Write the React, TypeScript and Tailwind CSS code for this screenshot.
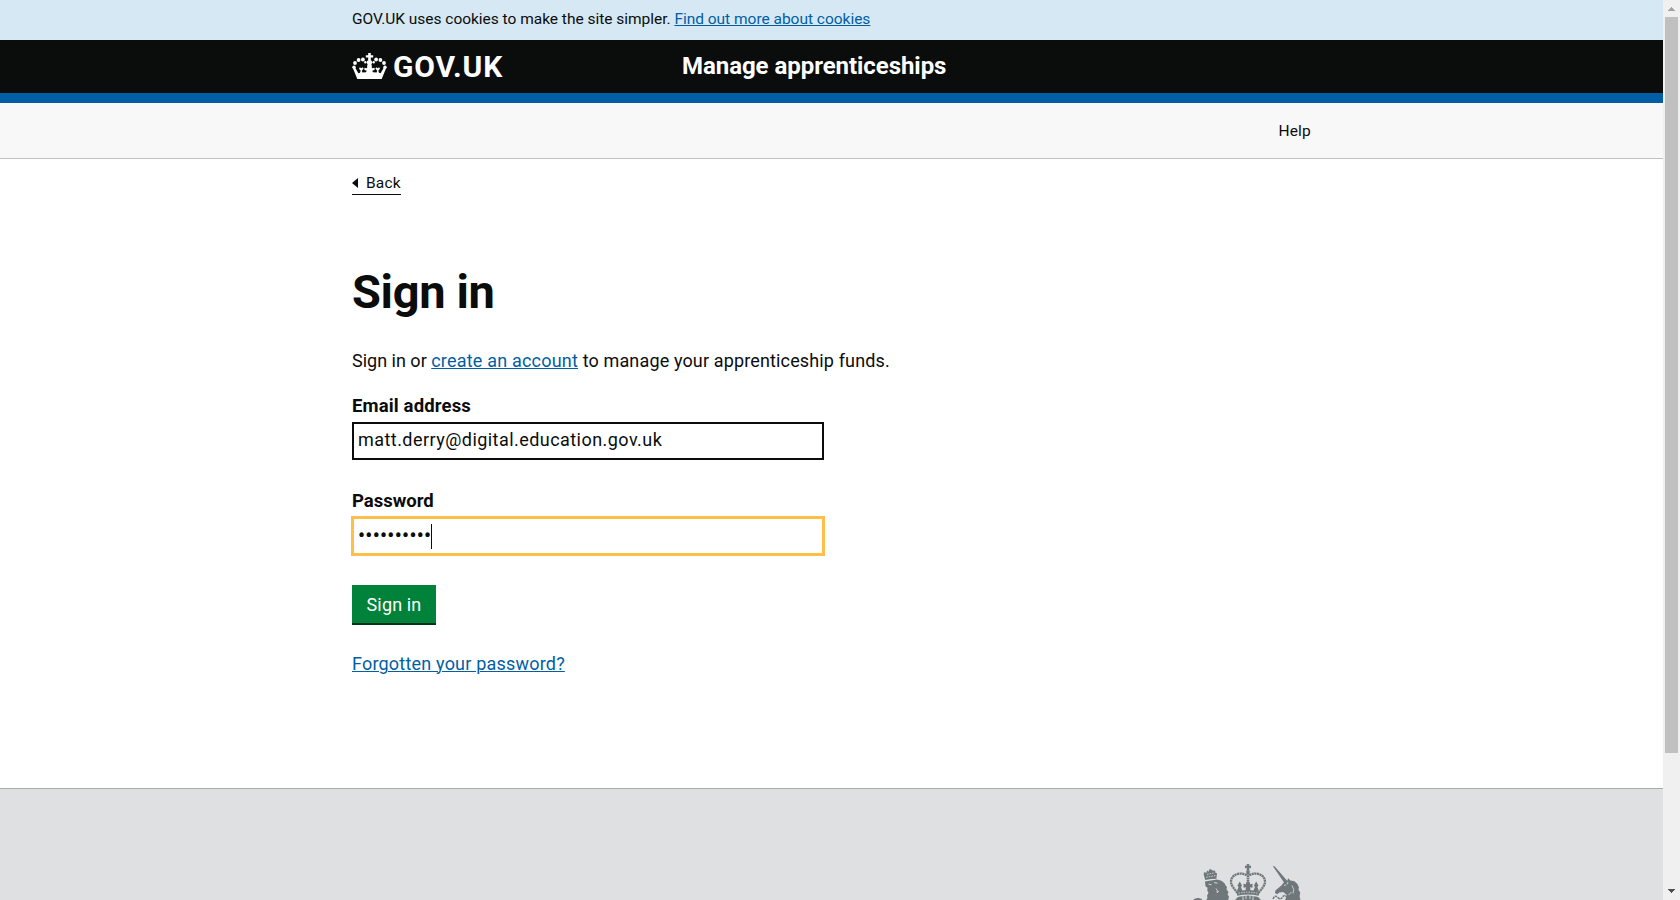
import React from 'react';

const linkClass = 'text-[#005ea5] underline decoration-1 underline-offset-1';

function Crown() {
  return (
    <svg className="h-[27px] w-[35px]" viewBox="0 0 35 27" fill="#fff">
      <path d="M16.2 0h2.600v2.300h2.400v2.300h-2.400v2.600c1.800.6 2 2.600.6 4l.6 2.600h-5l.6-2.600c-1.400-1.400-1.200-3.400.6-4V4.600h-2.400V2.300h2.400z" />
      <circle cx="2" cy="14.200" r="1.700" />
      <circle cx="3" cy="10" r="1.900" />
      <circle cx="6.600" cy="7" r="1.900" />
      <circle cx="10.900" cy="6.500" r="1.900" />
      <circle cx="13.300" cy="9.300" r="1.200" />
      <circle cx="33" cy="14.200" r="1.700" />
      <circle cx="32" cy="10" r="1.900" />
      <circle cx="28.400" cy="7" r="1.900" />
      <circle cx="24.100" cy="6.500" r="1.900" />
      <circle cx="21.700" cy="9.300" r="1.200" />
      <path d="M1 15.500l2.200-.8 3.200 5.500 1.600-.4.700-2-1.700-2 .9-1.600 1.400 1.100 1.500-1.100.8 1.600-1.800 2 .6 1.700 3.500-.2.900-1.600-2.400-.6v-2.400l2.500.5.8-2.500h3.600l.8 2.500 2.500-.5v2.400l-2.400.6.9 1.600 3.500.2.600-1.700-1.800-2 .8-1.600 1.500 1.100 1.400-1.100.9 1.600-1.700 2 .7 2 1.600.4 3.200-5.500 2.200.8-4.300 10.400H5.300z" />
    </svg>
  );
}

function CoatOfArms() {
  return (
    <svg className="block h-[40px] w-[120px]" viewBox="1190 860 120 40" fill="#6f777b">
      {/* lion */}
      <path d="M1205.200 880l-1.600-6 .8-2 2 1 .6-2.600 1.800 1.200.8-2.600 2.200.8 1.200 1 2-.4.4 2.400 1.600.4-.6 5.600-5.400.2z" />
      <path d="M1206.200 877.200l9.600-1.600M1207 874.400l7.600-1.600" stroke="#dee0e2" strokeWidth=".8" strokeDasharray="1.600 1" />
      <path d="M1205 881.500l6-1 6-1 4.500 1.300 3 2.500 1 2 1.500 2-.5 2 2 3-1 2 1.500 2.500-1 4h-22l1.500-3-.5-2 1.500-3-1.200-2 .2-3-2-1.500z" />
      <path d="M1208.500 884.200l3 .6M1214 882.600l3.500.6M1216 888.500q2 1.500 1 4l1.800-1.200" stroke="#dee0e2" strokeWidth=".9" fill="none" />
      <path d="M1193 900q4-3.600 9-.8v.8z" />
      {/* crown */}
      <path d="M1246.600 864h2.800l-.4 1.900 2-.5v2.800l-2-.4.6 2.200h-3.200l.6-2.200-2 .4v-2.800l2 .5z" />
      <circle cx="1248" cy="872" r="1.900" />
      <path d="M1246.700 875.200c-7-3.800-15.400-.6-15.700 6.300-.1 4.400 3.800 7.500 6.500 11.500M1249.300 875.200c7-3.800 15.400-.6 15.700 6.300.1 4.400-3.800 7.500-6.500 11.500" fill="none" stroke="#6f777b" strokeWidth="2.300" strokeDasharray="2.100 .5" />
      <path d="M1248 873v11" stroke="#6f777b" strokeWidth="2.600" strokeDasharray="1.800 .5" />
      <path d="M1246.500 882h3l.6 2.300 2.400-.6v4l-2.400-.5.500 3.800h-5.200l.5-3.800-2.400.5v-4l2.400.6z" />
      <path d="M1239.800 881.500l2.200 4-1 1.500 1.400 4h-5.400l1.500-4-1-1.500zM1256.200 881.500l2.200 4-1 1.500 1.400 4h-5.400l1.500-4-1-1.500z" />
      <path d="M1236.500 891.500q11.500-3 23 0l-.8 4.300q-10.700-2.800-21.400 0z" />
      <path d="M1238.500 893.300q9.500-2.300 19 0" fill="none" stroke="#dee0e2" strokeWidth=".8" strokeDasharray="1.500 1" />
      <path d="M1238 897q10-3 20 0l3 3h-26z" />
      <path d="M1243 895.500v4.500M1246 895v4M1250 895v4M1253 895.500v4.500" stroke="#dee0e2" strokeWidth=".9" />
      {/* unicorn */}
      <path d="M1272.800 866l2 .6 13 15-3.300 1.600z" />
      <path d="M1275 893l.4-2.600 6-4.800 2.600-3.400 3-.8 1.200-3.200 2.200 2.400 4 .6 3 2.800 1.600 3.600-.6 2 1.800 2.800-.6 4 .8 3.600h-15.200l1.600-5-3.600-3-4 .6-1.800 1.600z" />
      <path d="M1284 885.500l2-.6M1288 882l-1 2.500M1292 885.500q3 4 1 8M1288.500 895l3-3" stroke="#dee0e2" strokeWidth=".8" fill="none" />
      <path d="M1273 899q2-4.600 4.800-1.600t5-.6 5 2.200" fill="none" stroke="#6f777b" strokeWidth="1.500" strokeDasharray="2.400 .7" />
    </svg>
  );
}

function Scrollbar() {
  return (
    <div className="flex h-[900px] w-[17px] shrink-0 flex-col items-center bg-[#f0f0f0]">
      <svg className="h-[17px] w-[17px]" viewBox="0 0 17 17" fill="#a3a3a3" shapeRendering="crispEdges">
        <path d="M5 11h7V10h-1V9h-1V8H9V7H8v1H7v1H6v1H5z" />
      </svg>
      <div className="h-[736px] w-[13px] bg-[#c0c0c0]" />
      <svg className="mt-auto h-[17px] w-[17px]" viewBox="0 0 17 17" fill="#505050" shapeRendering="crispEdges">
        <path d="M5 6h7v1h-1v1h-1v1H9v1H8V9H7V8H6V7H5z" />
      </svg>
    </div>
  );
}

export default function App() {
  return (
    <div className="flex h-[900px] w-full overflow-hidden bg-white font-['Roboto','Liberation_Sans',sans-serif] text-[#0b0c0c]">
      <div className="flex min-w-0 flex-1 flex-col">
        <div className="h-[40px] bg-[#d5e8f3] pt-[9px] pl-px">
          <p className="mx-auto w-[960px] text-[15.5px] leading-[20px] tracking-[-0.02px]">
            GOV.UK uses cookies to make the site simpler.{' '}
            <a className={linkClass}>Find out more about cookies</a>
          </p>
        </div>

        <header className="h-[63px] border-b-[10px] border-[#005ea5] bg-[#0b0c0c] pl-px">
          <div className="mx-auto flex h-[53px] w-[960px] items-center text-white">
            <a className="flex w-[330px] items-center gap-[6px]">
              <Crown />
              <span className="text-[30px] leading-[53px] font-bold tracking-[0.9px]">GOV.UK</span>
            </a>
            <a className="pb-[2px] text-[24px] leading-[50px] font-bold tracking-[-0.05px]">Manage apprenticeships</a>
          </div>
        </header>

        <nav className="h-[56px] border-b border-[#bfc1c3] bg-[#f8f8f8] pl-px">
          <div className="mx-auto flex h-[55px] w-[960px] items-center justify-end pt-[2px] pr-[1px] text-[15.5px] tracking-[0.2px]">
            <a>Help</a>
          </div>
        </nav>

        <div className="flex flex-1 flex-col pl-px">
          <main className="mx-auto flex w-[960px] flex-1 flex-col items-start pt-[14px] text-[18px] leading-[24px]">
            <a className="flex h-[22px] items-center gap-[8px] border-b border-[#0b0c0c] text-[15.5px] leading-[21px] tracking-[0.2px]">
              <svg className="mb-px h-[10px] w-[6px]" viewBox="0 0 6 10" fill="#0b0c0c">
                <path d="M6 0v10L0 5z" />
              </svg>
              Back
            </a>

            <h1 className="mt-[72px] text-[47px] leading-[50px] font-bold tracking-[-0.35px]">Sign in</h1>

            <p className="mt-[32px] tracking-[0.14px]">
              <span className="tracking-normal">Sign in or </span>
              <a className={`${linkClass} tracking-[0.2px]`}>create an account</a> to manage your apprenticeship funds.
            </p>

            <label className="mt-[21px] text-[18.5px] font-bold tracking-[0.15px]">Email address</label>
            <div className="mt-[4px] flex h-[38px] w-[472px] items-center border-2 border-[#0b0c0c] px-[4px] pb-[3px] tracking-[0.45px]">
              matt.derry@digital.education.gov.uk
            </div>

            <label className="mt-[29px] text-[18.5px] font-bold">Password</label>
            <div className="-ml-[1px] mt-[3px] flex h-[40px] w-[474px] items-center border-[3px] border-[#ffbf47] pl-[4px]">
              <span className="pb-[3px] text-[20px] font-medium tracking-[0.35px]">••••••••••</span>
              <span className="h-[25px] w-px bg-[#0b0c0c]" />
            </div>

            <button className="mt-[29px] h-[40px] w-[84px] border-b-2 border-[#003618] bg-[#00823b] pt-px tracking-[0.15px] text-white">
              Sign in
            </button>

            <a className={`${linkClass} mt-[27px] tracking-[0.2px]`}>Forgotten your password?</a>
          </main>
        </div>

        <footer className="h-[112px] shrink-0 border-t border-[#a1acb2] bg-[#dee0e2] pl-px">
          <div className="mx-auto flex w-[960px] justify-end pt-[71px] pr-[2px]">
            <CoatOfArms />
          </div>
        </footer>
      </div>
      <Scrollbar />
    </div>
  );
}
